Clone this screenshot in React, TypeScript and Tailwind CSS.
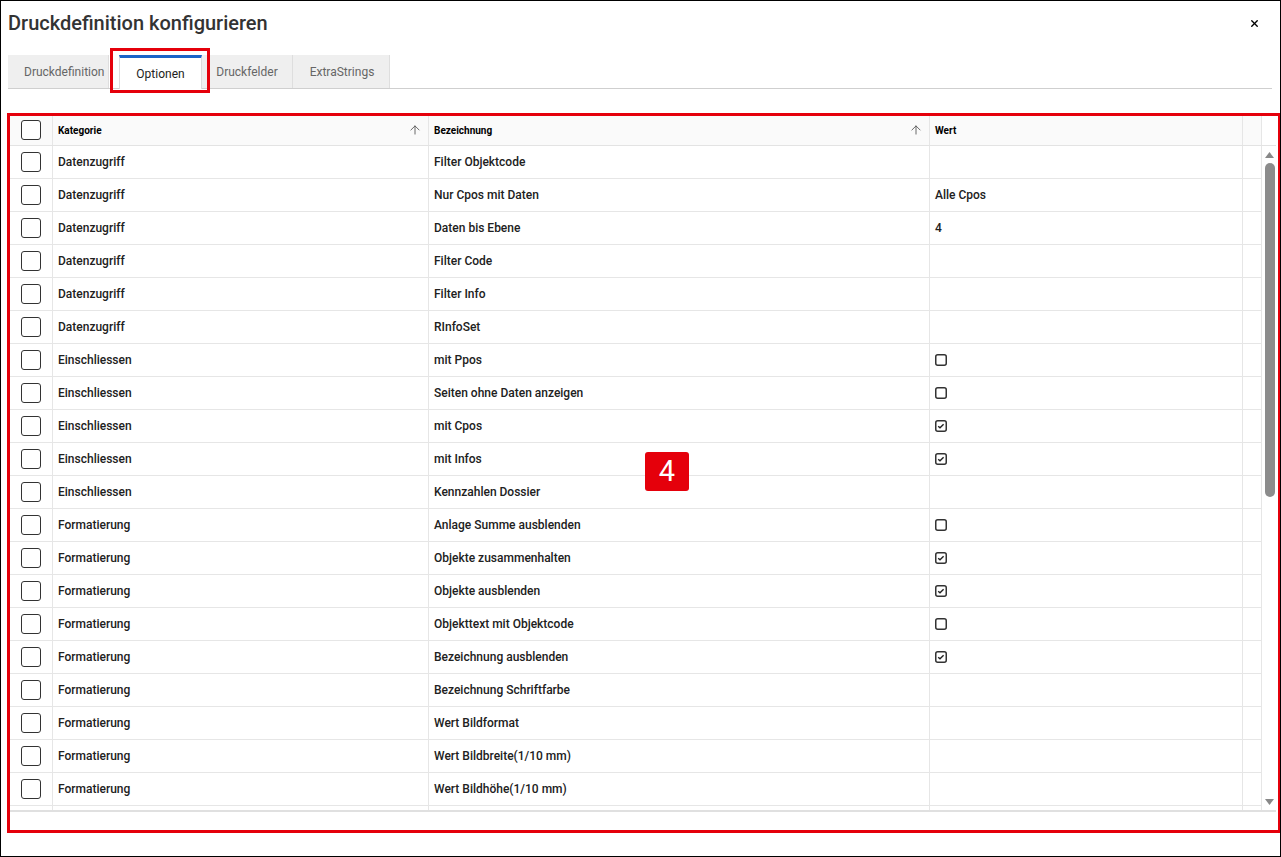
import { ArrowUp, X } from 'lucide-react'

type Row = { kat: string; bez: string; wert?: string; check?: boolean }

const rows: Row[] = [
  { kat: 'Datenzugriff', bez: 'Filter Objektcode' },
  { kat: 'Datenzugriff', bez: 'Nur Cpos mit Daten', wert: 'Alle Cpos' },
  { kat: 'Datenzugriff', bez: 'Daten bis Ebene', wert: '4' },
  { kat: 'Datenzugriff', bez: 'Filter Code' },
  { kat: 'Datenzugriff', bez: 'Filter Info' },
  { kat: 'Datenzugriff', bez: 'RInfoSet' },
  { kat: 'Einschliessen', bez: 'mit Ppos', check: false },
  { kat: 'Einschliessen', bez: 'Seiten ohne Daten anzeigen', check: false },
  { kat: 'Einschliessen', bez: 'mit Cpos', check: true },
  { kat: 'Einschliessen', bez: 'mit Infos', check: true },
  { kat: 'Einschliessen', bez: 'Kennzahlen Dossier' },
  { kat: 'Formatierung', bez: 'Anlage Summe ausblenden', check: false },
  { kat: 'Formatierung', bez: 'Objekte zusammenhalten', check: true },
  { kat: 'Formatierung', bez: 'Objekte ausblenden', check: true },
  { kat: 'Formatierung', bez: 'Objekttext mit Objektcode', check: false },
  { kat: 'Formatierung', bez: 'Bezeichnung ausblenden', check: true },
  { kat: 'Formatierung', bez: 'Bezeichnung Schriftfarbe' },
  { kat: 'Formatierung', bez: 'Wert Bildformat' },
  { kat: 'Formatierung', bez: 'Wert Bildbreite(1/10 mm)' },
  { kat: 'Formatierung', bez: 'Wert Bildhöhe(1/10 mm)' },
]

const tabs = ['Druckdefinition', 'Optionen', 'Druckfelder', 'ExtraStrings']

function SmallCheck({ checked }: { checked: boolean }) {
  return (
    <svg width="12" height="12" viewBox="0 0 12 12">
      <rect x="0.75" y="0.75" width="10.5" height="10.5" rx="2" fill="white" stroke="#333" strokeWidth="1.5" />
      {checked && <path d="M3.2 6.2 L5 7.8 L8.6 4.2" fill="none" stroke="#222" strokeWidth="1.4" />}
    </svg>
  )
}

export default function App() {
  return (
    <div
      className="relative w-[1281px] h-[857px] bg-white border border-black overflow-hidden text-[#212121]"
      style={{ fontFamily: 'Roboto, "Liberation Sans", sans-serif' }}
    >
      <div className="h-[44px] flex items-center justify-between pl-[7px] pr-[20px]">
        <h1 className="text-[20px] font-medium text-[#333]">Druckdefinition konfigurieren</h1>
        <X className="w-[11px] h-[11px] text-black" strokeWidth={3} />
      </div>

      <div className="mt-[10px] ml-[7px] w-[1264px] h-[34px] flex border-b border-[#cfcfcf]">
        {tabs.map((tab) =>
          tab === 'Optionen' ? (
            <div
              key={tab}
              className="ml-[10px] w-[83px] h-[34px] -mb-px bg-white border-t-[3px] border-t-[#1b64c8] border-x border-x-[#dcdcdc] flex items-center justify-center text-[12px] text-[#222]"
            >
              {tab}
            </div>
          ) : (
            <div
              key={tab}
              className={`h-[33px] bg-[#efefef] border-r border-[#dedede] flex items-center text-[12px] text-[#666] ${
                tab === 'Druckdefinition'
                  ? 'w-[101px] pl-[16px]'
                  : tab === 'Druckfelder'
                  ? 'w-[91px] justify-center'
                  : 'w-[97px] justify-center pl-[2px]'
              }`}
            >
              {tab}
            </div>
          )
        )}
      </div>

      <div className="mt-[26px] ml-[8px] w-[1267px] h-[713px] flex flex-col">
        <div className="flex h-[31px] border-b border-[#e3e3e3]">
          <div className="grid grid-cols-[44px_376px_501px_313px_19px] bg-[#fafafa] text-[10px] font-bold text-black">
            <div className="flex items-center justify-center border-r border-[#e6e6e6] pl-px">
              <div className="w-[20px] h-[20px] rounded-[3px] border border-[#333] bg-white" />
            </div>
            <div className="flex items-center justify-between pl-[5px] pr-[6px] border-r border-[#e6e6e6]">
              <span>Kategorie</span>
              <ArrowUp className="w-[14px] h-[14px] text-[#555]" strokeWidth={1.5} />
            </div>
            <div className="flex items-center justify-between pl-[5px] pr-[6px] border-r border-[#e6e6e6]">
              <span>Bezeichnung</span>
              <ArrowUp className="w-[14px] h-[14px] text-[#555]" strokeWidth={1.5} />
            </div>
            <div className="flex items-center pl-[5px] border-r border-[#e6e6e6]">
              <span>Wert</span>
            </div>
            <div className="border-r border-[#e6e6e6]" />
          </div>
          <div className="w-[14px]" />
        </div>

        <div className="flex h-[666px] border-b-2 border-[#e0e0e0]">
          <div className="overflow-hidden">
            {rows.map((r, i) => (
              <div
                key={i}
                className="grid grid-cols-[44px_376px_501px_313px_19px] h-[33px] border-b border-[#e6e6e6] text-[12px] font-medium"
              >
                <div className="flex items-center justify-center border-r border-[#e6e6e6] pl-px">
                  <div className="w-[20px] h-[20px] rounded-[3px] border border-[#333] bg-white" />
                </div>
                <div className="flex items-center pl-[5px] border-r border-[#e6e6e6]">{r.kat}</div>
                <div className="flex items-center pl-[5px] border-r border-[#e6e6e6]">{r.bez}</div>
                <div className="flex items-center pl-[5px] border-r border-[#e6e6e6]">
                  {r.check !== undefined ? <SmallCheck checked={r.check} /> : r.wert}
                </div>
                <div className="border-r border-[#e6e6e6]" />
              </div>
            ))}
            <div className="grid grid-cols-[44px_376px_501px_313px_19px] h-[33px]">
              <div className="border-r border-[#e6e6e6]" />
              <div className="border-r border-[#e6e6e6]" />
              <div className="border-r border-[#e6e6e6]" />
              <div className="border-r border-[#e6e6e6]" />
              <div className="border-r border-[#e6e6e6]" />
            </div>
          </div>
          <div className="w-[14px] flex flex-col items-center pt-[6px] pb-[5px]">
            <svg width="9" height="6" viewBox="0 0 9 6">
              <path d="M4.5 0 L9 6 L0 6 Z" fill="#888" />
            </svg>
            <div className="mt-[5px] ml-px w-[10px] h-[334px] rounded-full bg-[#8c8c8c]" />
            <div className="flex-1" />
            <svg width="9" height="6" viewBox="0 0 9 6">
              <path d="M0 0 L9 0 L4.5 6 Z" fill="#888" />
            </svg>
          </div>
        </div>
      </div>

      <div className="absolute left-[109px] top-[47px] w-[100px] h-[45px] border-[3px] border-[#e5000b]" />
      <div className="absolute left-[6px] top-[112px] w-[1274px] h-[720px] border-[3px] border-[#e5000b]" />
      <div className="absolute left-[644px] top-[451px] w-[44px] h-[39px] rounded-[3px] bg-[#e5000b] flex items-center justify-center text-white text-[29px] leading-none">
        4
      </div>
    </div>
  )
}
